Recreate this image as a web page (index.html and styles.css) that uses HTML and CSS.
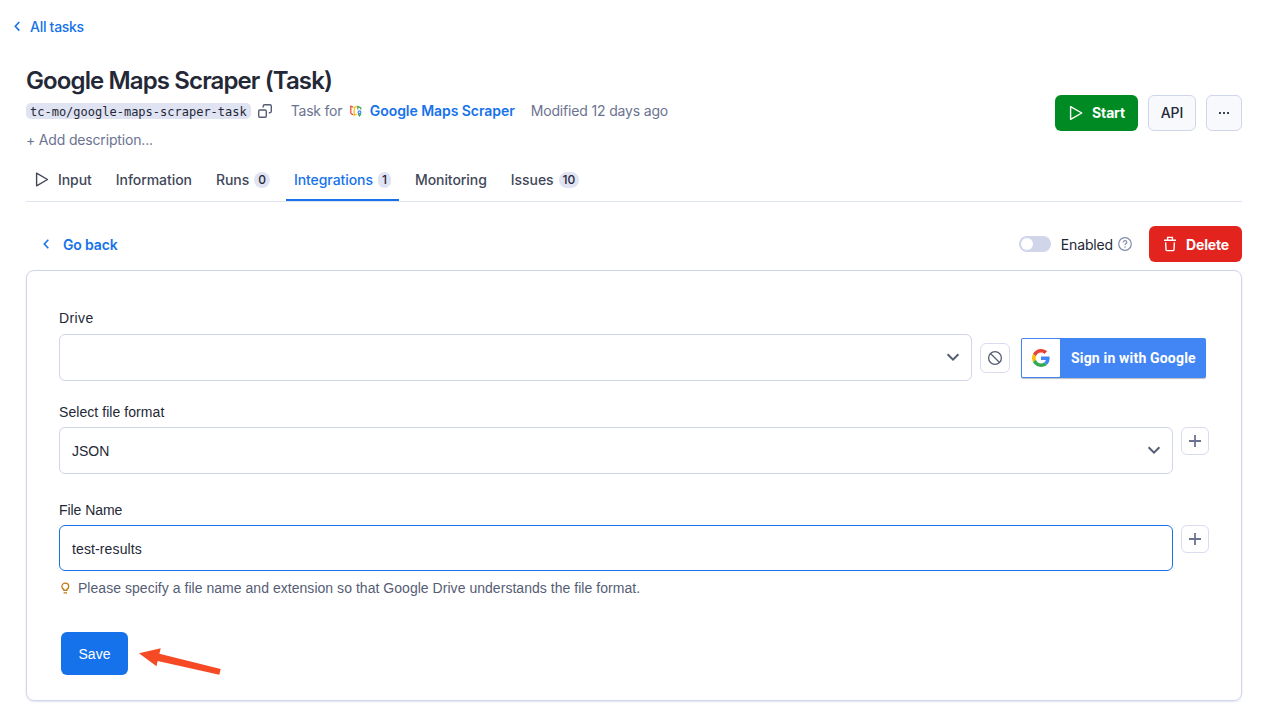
FILE: index.html
```html
<!DOCTYPE html>
<html lang="en">
<head>
<meta charset="utf-8">
<title>Google Maps Scraper (Task)</title>
<link rel="stylesheet" href="styles.css">
</head>
<body>
<main class="page">
  <a class="breadcrumb"><svg class="chev-left" width="8" height="12" viewBox="0 0 8 12"><path d="M6.300 1 2.300 5.300l4 4.300"/></svg><span>All tasks</span></a>

  <header class="header">
    <div class="header-info">
      <h1 class="title">Google Maps Scraper (Task)</h1>
      <div class="meta">
        <code class="slug">tc-mo/google-maps-scraper-task</code>
        <svg class="copy" width="16" height="16" viewBox="0 0 16 16"><rect x="1.7" y="7" width="7.6" height="7.3" rx="1.2"/><path d="M6.2 4.6V3.2Q6.2 1.7 7.7 1.7h5.1q1.5 0 1.5 1.5v5.1q0 1.4-1.5 1.4h-1"/></svg>
        <span class="task-for">Task for</span>
        <svg class="maps" width="12" height="12" viewBox="0 0 12 12"><path d="M3.300 2.300.8 1.200V7.600q0 1 .8 1.300l1.600.9" stroke="#ea4335"/><path d="M6.800 1.400 4.200 2.600v7.600l2.600-1.200" stroke="#fbbc04"/><path d="M7.800 4.600V1.400L10.800 2.900v1.600" stroke="#34a853"/><circle cx="9.500" cy="7.300" r="1.400" stroke="#4285f4"/><path d="M8.200 8.900l1.300 2 1.300-2" stroke="#34a853"/></svg>
        <a class="actor">Google Maps Scraper</a>
        <span class="modified">Modified 12 days ago</span>
      </div>
      <div class="description">+ Add description...</div>
    </div>
    <div class="actions">
      <button class="btn btn-start"><svg width="14" height="16" viewBox="0 0 14 16"><path d="M1.6 1.700v12.600L12.800 8z"/></svg><span>Start</span></button>
      <button class="btn btn-light btn-api">API</button>
      <button class="btn btn-light btn-more"><svg width="12" height="4" viewBox="0 0 12 4"><path d="M1 1h2v2H1zM5 1h2v2H5zM9 1h2v2H9z"/></svg></button>
    </div>
  </header>

  <nav class="tabs">
    <a class="tab tab-input"><svg width="14" height="16" viewBox="0 0 14 16"><path d="M1.6 1.200v12.600L12.500 7.500z"/></svg><span>Input</span></a>
    <a class="tab">Information</a>
    <a class="tab">Runs<span class="count">0</span></a>
    <a class="tab tab-active">Integrations<span class="count">1</span></a>
    <a class="tab">Monitoring</a>
    <a class="tab">Issues<span class="count">10</span></a>
  </nav>

  <div class="toolbar">
    <a class="back"><svg class="chev-left" width="8" height="12" viewBox="0 0 8 12"><path d="M6.300 1.700 2.300 6l4 4.300"/></svg><span class="back-text">Go back</span></a>
    <div class="toolbar-right">
      <span class="switch"><i class="knob"></i></span>
      <span class="enabled">Enabled</span>
      <svg class="help" width="14" height="14" viewBox="0 0 14 14"><circle cx="7" cy="7" r="6.3"/><path d="M5.2 5.6c0-1.2.8-1.9 1.8-1.9s1.8.7 1.8 1.7c0 1.3-1.8 1.3-1.8 2.5M7 9.3v1.4"/></svg>
      <button class="btn btn-delete"><svg width="14" height="16" viewBox="0 0 14 16"><path d="M1 4.200h12M4.600 4V1.400h4.800V4M2.600 6.400l.4 7q.1 1.200 1.100 1.200h5.800q1 0 1.100-1.200l.4-7"/></svg><span class="delete-text">Delete</span></button>
    </div>
  </div>

  <section class="card">
    <label class="label label-drive">Drive</label>
    <div class="row row-drive">
      <div class="select"><span></span><svg class="chev-down" width="14" height="12" viewBox="0 0 14 12"><path d="M1.600 2.300 7 7.700l5.400-5.400"/></svg></div>
      <button class="icon-btn icon-btn-block"><svg width="16" height="16" viewBox="0 0 16 16"><circle cx="8" cy="8" r="6.4"/><path d="m3.5 3.5 9 9"/></svg></button>
      <button class="google">
        <span class="google-logo"><svg width="18" height="18" viewBox="0 0 48 48"><path fill="#ea4335" d="M24 9.5c3.5 0 6.7 1.2 9.200 3.600l6.900-6.900C35.900 2.400 30.500 0 24 0 14.600 0 6.500 5.400 2.600 13.200l8 6.200C12.400 13.700 17.700 9.500 24 9.500z"/><path fill="#4285f4" d="M47 24.500c0-1.600-.2-3.100-.4-4.500H24v9h12.900c-.6 3-2.200 5.500-4.700 7.200l7.700 6C44.400 38 47 31.800 47 24.500z"/><path fill="#fbbc05" d="M10.500 28.600c-.5-1.500-.8-3-.8-4.600s.3-3.100.8-4.600l-8-6.200C.9 16.500 0 20.100 0 24s.9 7.500 2.600 10.800z"/><path fill="#34a853" d="M24 48c6.500 0 11.900-2.100 15.900-5.800l-7.700-6c-2.200 1.500-4.900 2.300-8.200 2.300-6.300 0-11.600-4.200-13.500-9.900l-8 6.200C6.500 42.600 14.600 48 24 48z"/></svg></span>
        <span class="google-text">Sign in with Google</span>
      </button>
    </div>

    <label class="label label-format">Select file format</label>
    <div class="row">
      <div class="select"><span>JSON</span><svg class="chev-down" width="14" height="12" viewBox="0 0 14 12"><path d="M1.600 2.300 7 7.700l5.400-5.400"/></svg></div>
      <button class="icon-btn"><svg width="14" height="14" viewBox="0 0 14 14"><path d="M1 7h12M7 1v12"/></svg></button>
    </div>

    <label class="label label-name">File Name</label>
    <div class="row">
      <div class="select input-focus"><span>test-results</span></div>
      <button class="icon-btn"><svg width="14" height="14" viewBox="0 0 14 14"><path d="M1 7h12M7 1v12"/></svg></button>
    </div>
    <div class="hint"><svg width="10" height="12" viewBox="0 0 10 12"><path d="M3.800 8.400V7.400C2.600 6.800 1.900 5.800 1.900 4.500a3.400 3.400 0 0 1 6.800 0c0 1.300-.7 2.300-1.900 2.900v1zM3.600 10.900h3.400"/></svg><span>Please specify a file name and extension so that Google Drive understands the file format.</span></div>

    <div class="submit">
      <button class="save">Save</button>
      <svg class="arrow" width="84" height="30" viewBox="0 0 84 30"><path d="M1 8.300 22.700 3.300 21.400 8.700 82.700 24 81.300 29.700 19.600 16 18.500 21.300z"/></svg>
    </div>
  </section>
</main>
</body>
</html>
```
FILE: styles.css
```css
* { box-sizing: border-box; }
body { margin: 0; background: #fff; color: #242836; font: 500 14px/20px Inter, sans-serif; }
svg { display: block; flex: none; fill: none; }
button { font: inherit; margin: 0; padding: 0; }
.page { width: 1268px; height: 724px; padding: 17px 26px 0; overflow: hidden; white-space: nowrap; }

.breadcrumb { display: flex; align-items: center; gap: 9px; margin-left: -13px; color: #1672eb; height: 20px; letter-spacing: -.28px; }
.chev-left { stroke: #1672eb; stroke-width: 1.6; }

.header { display: flex; justify-content: space-between; margin-top: 28px; height: 113px; }
.title { height: 32px; margin: 0; font-size: 24px; line-height: 32px; font-weight: 600; letter-spacing: -.88px; }
.header-info { padding-top: 0; }
.meta { display: flex; align-items: center; height: 20px; margin-top: 4px; color: #6b7391; font-weight: 400; }
.slug { height: 16px; padding: 0 4px; border-radius: 5px; background: #e0e3f2; color: #242836; font: 12px/18px "DejaVu Sans Mono", monospace; }
.copy { margin-left: 6px; stroke: #555d75; stroke-width: 1.4; }
.task-for { width: 51px; margin-left: 18px; letter-spacing: -.22px; }
.maps { margin-left: 8px; stroke-width: 1.2; }
.actor { width: 145px; margin-left: 8px; color: #1672eb; font-weight: 600; letter-spacing: -.05px; }
.modified { margin-left: 16px; letter-spacing: -.17px; }
.description { margin-top: 9px; color: #6b7391; font-weight: 400; letter-spacing: -.17px; }

.actions { display: flex; gap: 10px; padding-top: 30px; }
.btn { display: flex; align-items: center; justify-content: center; height: 36px; border: 0; border-radius: 6px; }
.btn-start { width: 83px; gap: 9px; padding-left: 1px; background: #008a23; color: #fff; font-weight: 700; letter-spacing: -.15px; }
.btn-start svg { stroke: #fff; stroke-width: 1.4; stroke-linejoin: round; }
.btn-light { background: #f8f9fd; border: 1px solid #d0d5e9; color: #242836; }
.btn-api { width: 48px; }
.btn-more { width: 36px; }
.btn-more svg { fill: #3e4457; }

.tabs { display: flex; gap: 8px; height: 44px; margin-top: -20px; padding-left: 1px; border-bottom: 1px solid #e0e3f2; letter-spacing: -.06px; }
.tab { display: flex; align-items: center; height: 43px; padding: 0 8px; color: #414758; }
.tab-input { gap: 9px; }
.tab-input svg { stroke: #414758; stroke-width: 1.4; stroke-linejoin: round; }
.tab-active { color: #1672eb; border-bottom: 2px solid #1672eb; padding-top: 2px; }
.count { height: 16px; margin-left: 5px; padding: 0 4px; border-radius: 8px; background: #e0e3f2; color: #242836; font-size: 12px; line-height: 16px; letter-spacing: 0; }

.toolbar { display: flex; align-items: center; justify-content: space-between; height: 36px; margin-top: 24px; padding-left: 16px; }
.back { display: flex; align-items: center; gap: 13px; color: #1672eb; font-weight: 600; }
.back-text { padding-top: 2px; letter-spacing: -.15px; }
.toolbar-right { display: flex; align-items: center; font-weight: 400; }
.switch { display: flex; width: 32px; height: 16px; padding: 2px; border-radius: 8px; background: #d0d5e9; }
.knob { width: 12px; height: 12px; border-radius: 50%; background: #fff; }
.enabled { margin-left: 10px; padding-top: 2px; letter-spacing: -.15px; }
.help { margin-left: 5px; stroke: #828bad; stroke-width: 1.2; }
.btn-delete { width: 93px; margin-left: 17px; padding-left: 1px; gap: 9px; background: #e2231e; color: #fff; font-weight: 700; letter-spacing: -.15px; }
.btn-delete svg { stroke: #fff; stroke-width: 1.4; }
.delete-text { padding-top: 2px; }

.card { height: 431px; margin-top: 8px; padding: 37px 32px 0; border: 1px solid #d0d5e9; border-radius: 8px; box-shadow: 0 1px 2px #c5cae488; font: 400 14px/20px "Liberation Sans", Arial, sans-serif; }
.label { display: block; height: 20px; }
.label-drive { letter-spacing: .4px; }
.label-format { margin-top: 21px; letter-spacing: .06px; }
.label-name { margin-top: 26px; letter-spacing: -.05px; }
.row { display: flex; gap: 8px; margin-top: 5px; }
.row-drive { margin-top: 6px; align-items: center; }
.select { display: flex; align-items: center; justify-content: space-between; width: 1114px; height: 47px; padding: 0 11px 0 12px; border: 1px solid #d0d5e9; border-radius: 6px; }
.row-drive .select { width: 913px; }
.chev-down { stroke: #555d75; stroke-width: 2; }
.input-focus { height: 46px; padding-top: 2px; border-color: #1672eb; letter-spacing: .12px; }
.icon-btn { display: flex; align-items: center; justify-content: center; width: 28px; height: 28px; border: 1px solid #d8dcee; border-radius: 6px; background: #fff; }
.icon-btn svg { stroke: #6b7391; stroke-width: 1.8; }
.icon-btn-block { width: 30px; height: 30px; }
.icon-btn-block svg { stroke: #555d75; stroke-width: 1.3; }
.google { display: flex; align-items: center; width: 185px; height: 40px; margin-left: 3px; padding: 1px; border: 0; border-radius: 2px; background: #4285f4; box-shadow: 0 1px 1px #0004; color: #fff; }
.google-logo { display: flex; align-items: center; justify-content: center; width: 38px; height: 38px; background: #fff; border-radius: 1px; }
.google-text { margin-left: 11px; font: 700 14px/20px Roboto, sans-serif; letter-spacing: .18px; }
.hint { display: flex; align-items: center; gap: 8px; height: 20px; margin: 7px 0 0 1px; color: #555d75; letter-spacing: .037px; }
.hint svg { stroke: #c27a12; stroke-width: 1.3; }
.submit { display: flex; gap: 10px; margin: 34px 0 0 2px; }
.save { width: 67px; height: 43px; border: 0; border-radius: 6px; background: #1672eb; color: #fff; }
.arrow { margin-top: 13px; fill: #f64a24; }
```
